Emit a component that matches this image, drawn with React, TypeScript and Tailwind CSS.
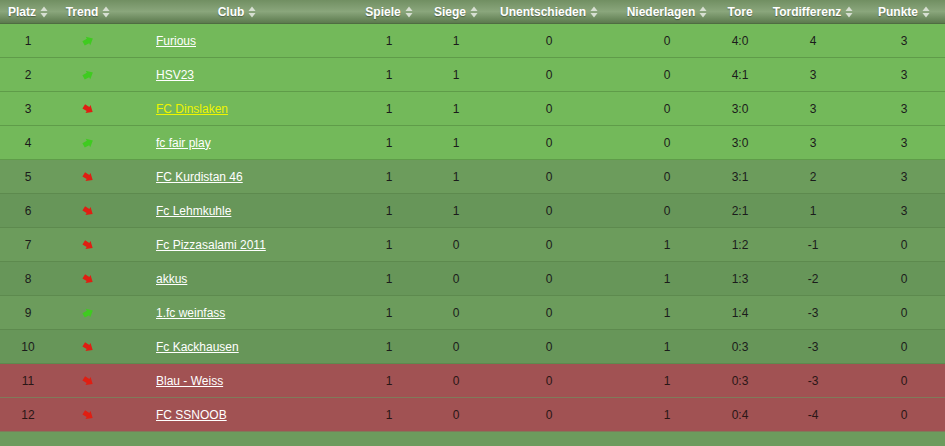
import React from 'react'

type Row = {
  pos: number
  up: boolean
  club: string
  sp: number
  s: number
  u: number
  n: number
  tore: string
  diff: number
  pts: number
}

const rows: Row[] = [
  { pos: 1, up: true, club: 'Furious', sp: 1, s: 1, u: 0, n: 0, tore: '4:0', diff: 4, pts: 3 },
  { pos: 2, up: true, club: 'HSV23', sp: 1, s: 1, u: 0, n: 0, tore: '4:1', diff: 3, pts: 3 },
  { pos: 3, up: false, club: 'FC Dinslaken', sp: 1, s: 1, u: 0, n: 0, tore: '3:0', diff: 3, pts: 3 },
  { pos: 4, up: true, club: 'fc fair play', sp: 1, s: 1, u: 0, n: 0, tore: '3:0', diff: 3, pts: 3 },
  { pos: 5, up: false, club: 'FC Kurdistan 46', sp: 1, s: 1, u: 0, n: 0, tore: '3:1', diff: 2, pts: 3 },
  { pos: 6, up: false, club: 'Fc Lehmkuhle', sp: 1, s: 1, u: 0, n: 0, tore: '2:1', diff: 1, pts: 3 },
  { pos: 7, up: false, club: 'Fc Pizzasalami 2011', sp: 1, s: 0, u: 0, n: 1, tore: '1:2', diff: -1, pts: 0 },
  { pos: 8, up: false, club: 'akkus', sp: 1, s: 0, u: 0, n: 1, tore: '1:3', diff: -2, pts: 0 },
  { pos: 9, up: true, club: '1.fc weinfass', sp: 1, s: 0, u: 0, n: 1, tore: '1:4', diff: -3, pts: 0 },
  { pos: 10, up: false, club: 'Fc Kackhausen', sp: 1, s: 0, u: 0, n: 1, tore: '0:3', diff: -3, pts: 0 },
  { pos: 11, up: false, club: 'Blau - Weiss', sp: 1, s: 0, u: 0, n: 1, tore: '0:3', diff: -3, pts: 0 },
  { pos: 12, up: false, club: 'FC SSNOOB', sp: 1, s: 0, u: 0, n: 1, tore: '0:4', diff: -4, pts: 0 },
]

const cols = 'grid grid-cols-[56px_64px_234px_70px_64px_122px_114px_32px_114px_68px]'

const headers: { label: string; sort: boolean }[] = [
  { label: 'Platz', sort: true },
  { label: 'Trend', sort: true },
  { label: 'Club', sort: true },
  { label: 'Spiele', sort: true },
  { label: 'Siege', sort: true },
  { label: 'Unentschieden', sort: true },
  { label: 'Niederlagen', sort: true },
  { label: 'Tore', sort: false },
  { label: 'Tordifferenz', sort: true },
  { label: 'Punkte', sort: true },
]

function SortIcon() {
  return (
    <svg width="8" height="12" viewBox="0 0 8 12" className="ml-[4px]">
      <path d="M4 0.5 L7.5 5 L0.5 5 Z" fill="#d7dfd2" />
      <path d="M4 11.5 L7.5 7 L0.5 7 Z" fill="#d7dfd2" />
    </svg>
  )
}

// blurry chunky trend arrows like the old gif icons
function Trend({ up }: { up: boolean }) {
  const color = up ? '#3fcb20' : '#e01e12'
  return (
    <svg width="14" height="12" viewBox="0 0 14 12" style={{ filter: 'blur(0.6px)' }}>
      <g transform={up ? 'rotate(-28 7 6)' : 'rotate(32 7 6)'}>
        <path d="M2 3.5 H7 V1.2 L12.5 6 L7 10.8 V8.5 H2 Z" fill={color} />
      </g>
    </svg>
  )
}

function rowBg(r: Row) {
  if (r.pos >= 11) return 'bg-[#a15253] border-[#807a5a] text-[#2a1616]'
  if (r.pos <= 4) return 'bg-[#73b95a] border-[#5f9c49] text-[#1b1b1b]'
  return r.pos % 2 === 1
    ? 'bg-[#6c9c5c] border-[#5d8a4e] text-[#1b1b1b]'
    : 'bg-[#679659] border-[#5d8a4e] text-[#1b1b1b]'
}

export default function App() {
  return (
    <div className="w-[945px] h-[446px] bg-[#6c9b5d] font-['Liberation_Sans',Arial,sans-serif] text-[12px] overflow-hidden">
      <div className={`${cols} h-[24px] bg-gradient-to-b from-[#718f62] via-[#8aa67c] to-[#5c7a4e] border-b border-[#4f6c42] text-white font-bold [text-shadow:0_1px_1px_rgba(0,0,0,0.35)]`}>
        {headers.map(h => (
          <div key={h.label} className="flex items-center justify-center">
            <span>{h.label}</span>
            {h.sort && <SortIcon />}
          </div>
        ))}
      </div>
      {rows.map(r => (
        <div key={r.pos} className={`${cols} h-[34px] border-b ${rowBg(r)}`}>
          <div className="flex items-center justify-center">{r.pos}</div>
          <div className="flex items-center justify-center pt-[1px]">
            <Trend up={r.up} />
          </div>
          <div className="flex items-center pl-[36px]">
            <a
              href="#"
              className={`underline ${r.pos === 3 ? 'text-[#eef500]' : 'text-white'}`}
            >
              {r.club}
            </a>
          </div>
          <div className="flex items-center justify-center">{r.sp}</div>
          <div className="flex items-center justify-center">{r.s}</div>
          <div className="flex items-center justify-center">{r.u}</div>
          <div className="flex items-center justify-center">{r.n}</div>
          <div className="flex items-center justify-center">{r.tore}</div>
          <div className="flex items-center justify-center">{r.diff}</div>
          <div className="flex items-center justify-center">{r.pts}</div>
        </div>
      ))}
    </div>
  )
}
